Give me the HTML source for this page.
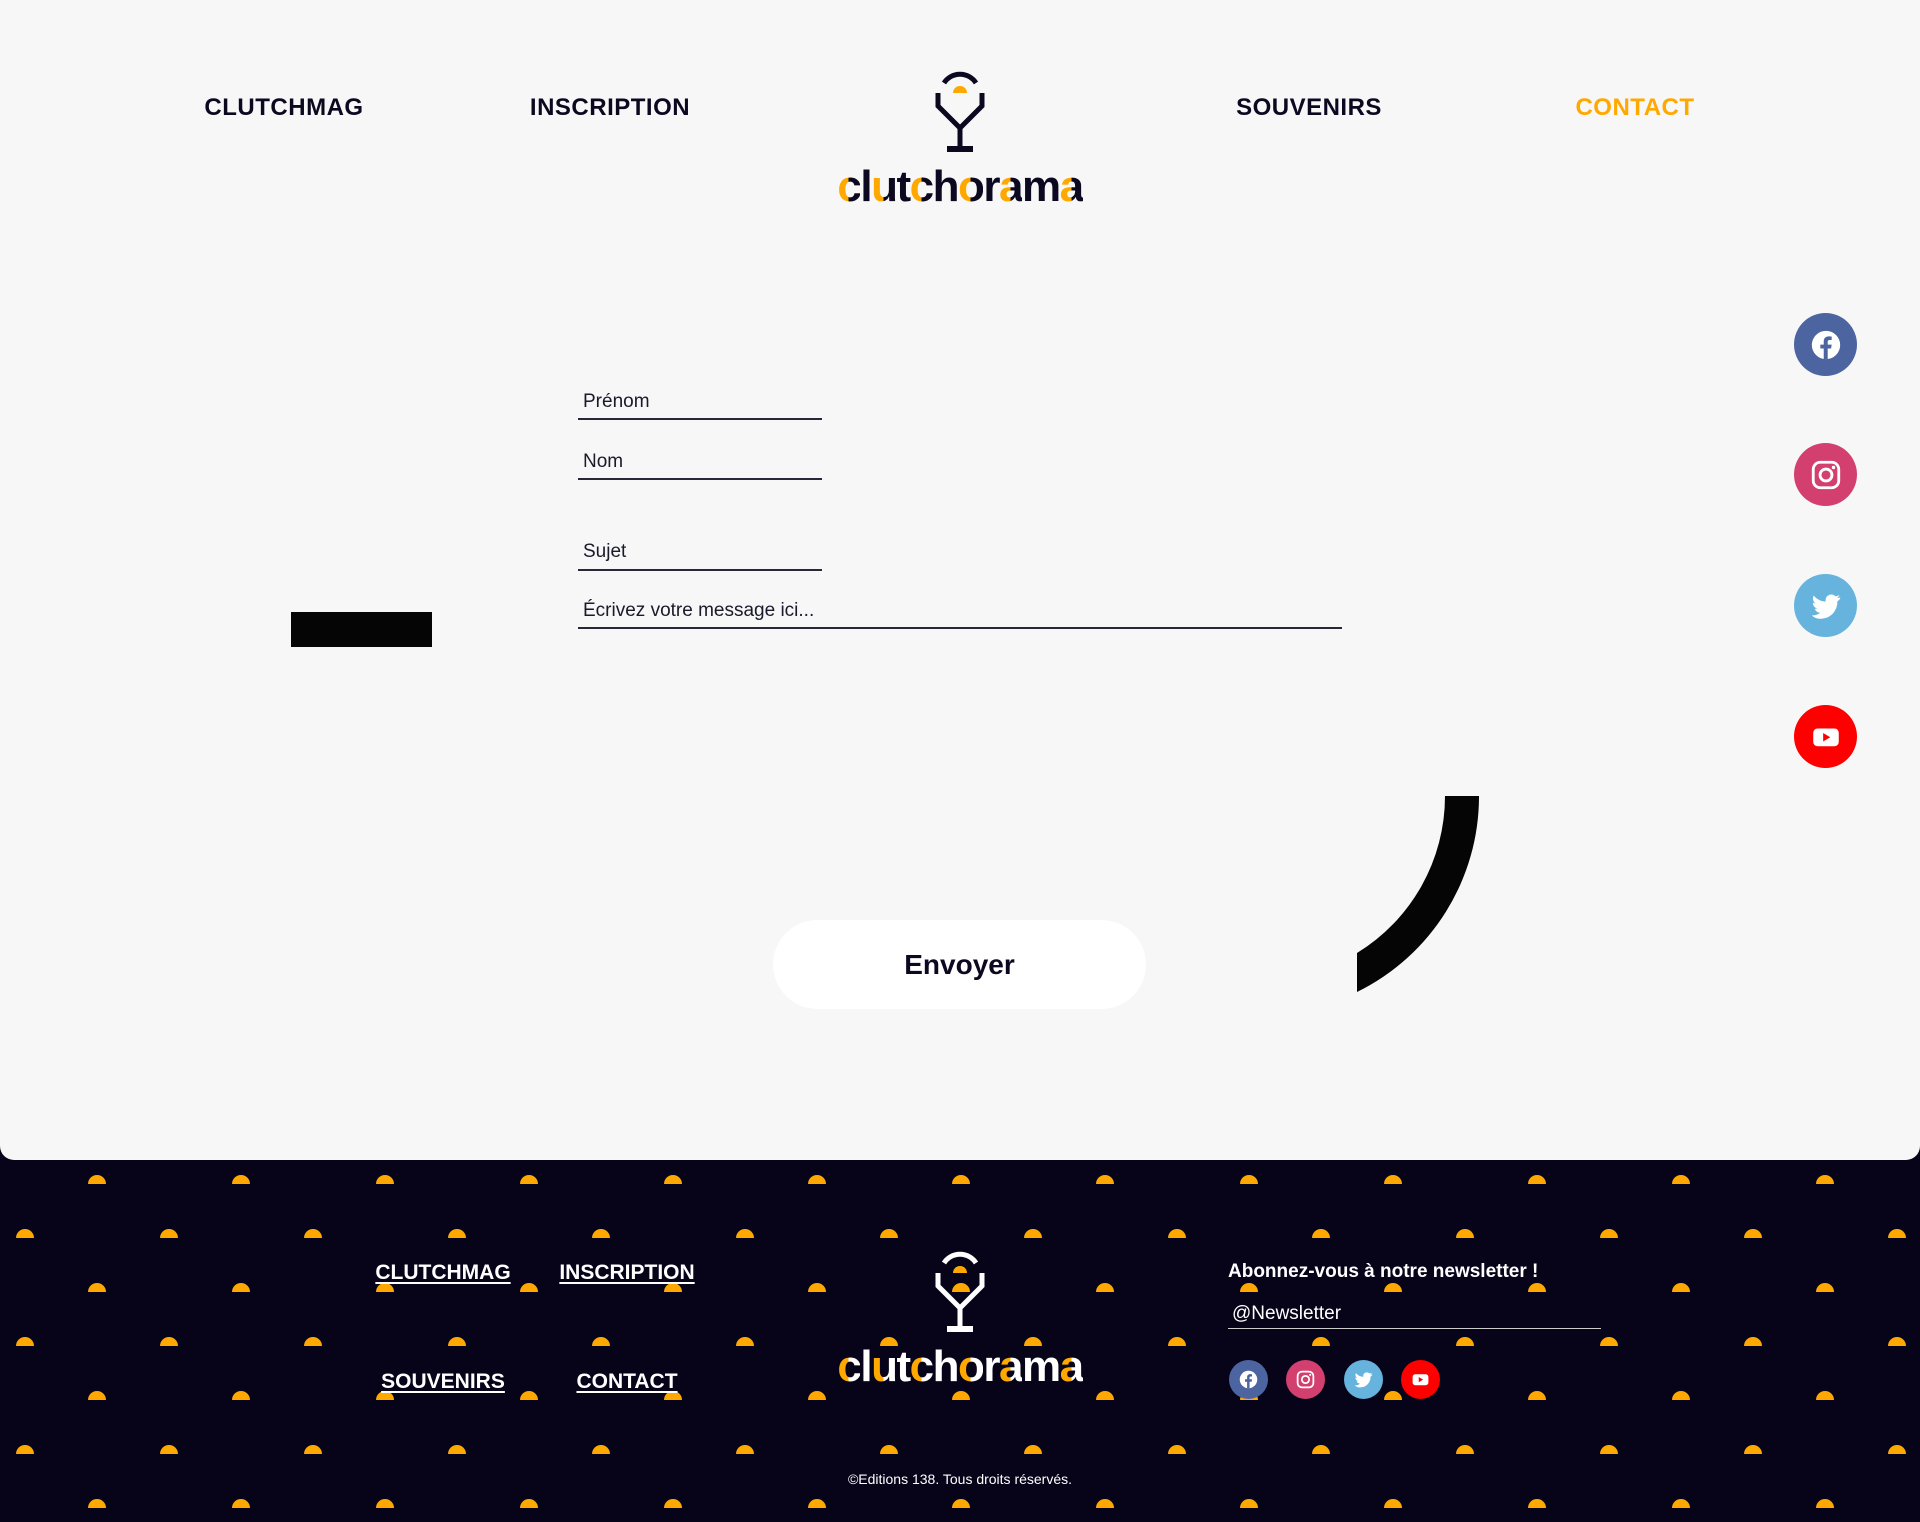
<!DOCTYPE html>
<html><head><meta charset="utf-8"><style>
*{margin:0;padding:0;box-sizing:border-box}
body{width:1920px;height:1522px;background:#07041a;font-family:"Liberation Sans",sans-serif;position:relative;overflow:hidden}
.main{position:absolute;left:0;top:0;width:1920px;height:1160px;background:#f7f7f7;border-radius:0 0 14px 14px}
.nav{position:absolute;top:94px;font-weight:bold;font-size:24px;color:#0b0820;transform:translateX(-50%);letter-spacing:0.5px}
.lbl{position:absolute;left:583px;font-size:19px;color:#1a1a2a}
.ln{position:absolute;left:578px;height:2px;background:#2a2838}
.soc{position:absolute;width:63px;height:63px;border-radius:50%;display:flex;align-items:center;justify-content:center}
.soc svg{width:34px;height:34px}
.ss{position:absolute;width:39px;height:39px;border-radius:50%;display:flex;align-items:center;justify-content:center;top:1360px}
.ss svg{width:21px;height:21px}
.fl{position:absolute;color:#fff;font-weight:bold;font-size:21px;text-decoration:underline;transform:translateX(-50%);text-underline-offset:3px}
.wm{position:absolute;left:830px;font-weight:bold;font-size:44px;letter-spacing:-1.5px;width:260px;text-align:center}
.wm span{display:inline-block;background-image:linear-gradient(90deg,#ffa800 0,#ffa800 50%,var(--c) 50%,var(--c) 100%);-webkit-background-clip:text;background-clip:text;-webkit-text-fill-color:transparent;color:transparent}
.wm span.d{background-image:none;-webkit-text-fill-color:var(--c);color:var(--c)}
</style></head><body>
<svg width="0" height="0" style="position:absolute">
<defs>
<symbol id="fb" viewBox="0 0 24 24"><circle cx="12" cy="12" r="10" fill="#fff"/><path d="M13.2 22V14.5h2.4l.4-2.8h-2.8V9.9c0-.8.3-1.4 1.4-1.4H16V6c-.3 0-1.1-.1-2.1-.1-2.1 0-3.5 1.3-3.5 3.6v2.2H8v2.8h2.4V22z" fill="#4c64a0"/></symbol>
<symbol id="ig" viewBox="0 0 24 24"><rect x="3" y="3" width="18" height="18" rx="5" fill="none" stroke="#fff" stroke-width="2"/><circle cx="12" cy="12" r="4.2" fill="none" stroke="#fff" stroke-width="2"/><circle cx="17.3" cy="6.7" r="1.2" fill="#fff"/></symbol>
<symbol id="tw" viewBox="0 0 24 24"><path d="M22 5.9c-.7.3-1.5.5-2.4.6.9-.5 1.5-1.3 1.8-2.3-.8.5-1.7.8-2.6 1-.8-.8-1.9-1.3-3-1.3-2.3 0-4.1 1.8-4.1 4.1 0 .3 0 .6.1.9C8.4 8.8 5.4 7.2 3.4 4.7c-.4.6-.6 1.3-.6 2.1 0 1.4.7 2.7 1.8 3.4-.7 0-1.3-.2-1.9-.5 0 2 1.4 3.7 3.3 4.1-.6.2-1.2.2-1.9.1.5 1.6 2 2.8 3.9 2.9-1.4 1.1-3.2 1.8-5.1 1.8-.3 0-.7 0-1-.1C3.7 20.4 5.9 21 8.3 21c7.5 0 11.7-6.2 11.700-11.700v-.5c.8-.6 1.5-1.3 2-2.1z" fill="#fff"/></symbol>
<symbol id="yt" viewBox="0 0 24 24"><rect x="3" y="6" width="18" height="12.5" rx="3" fill="#fff"/><path d="M10 9.2v6l5-3z" fill="#f00"/></symbol>
</defs></svg>

<div class="main">
<div class="nav" style="left:284px">CLUTCHMAG</div>
<div class="nav" style="left:610px">INSCRIPTION</div>
<div class="nav" style="left:1309px">SOUVENIRS</div>
<div class="nav" style="left:1635px;color:#ffa800">CONTACT</div>

<svg style="position:absolute;left:920px;top:60px" width="80" height="100" viewBox="920 60 80 100">
<path d="M944 83 A19 19 0 0 1 976 83" fill="none" stroke="#0b0820" stroke-width="5"/>
<path d="M953 93 A7 7 0 0 1 967 93 Z" fill="#ffa800"/>
<path d="M938 93 V106 L960 128 L982 106 V93" fill="none" stroke="#0b0820" stroke-width="5"/>
<path d="M960 127 V148" stroke="#0b0820" stroke-width="5"/>
<rect x="947" y="146" width="26" height="6" fill="#0b0820"/>
</svg>
<div class="wm" style="top:162px;--c:#0b0820"><span>c</span><span class="d">l</span><span>u</span><span class="d">t</span><span>c</span><span class="d">h</span><span>o</span><span class="d">r</span><span>a</span><span class="d">m</span><span>a</span></div>

<div class="lbl" style="top:391px">Prénom</div><div class="ln" style="top:418px;width:244px"></div>
<div class="lbl" style="top:451px">Nom</div><div class="ln" style="top:478px;width:244px"></div>
<div class="lbl" style="top:541px">Sujet</div><div class="ln" style="top:569px;width:244px"></div>
<div class="lbl" style="top:600px">Écrivez votre message ici...</div><div class="ln" style="top:627px;width:764px"></div>

<div style="position:absolute;left:291px;top:612px;width:141px;height:35px;background:#050505"></div>

<svg style="position:absolute;left:0;top:0" width="1920" height="1160"><path d="M1445 796 L1479 796 A218 218 0 0 1 1357 992 L1357 953 A184 184 0 0 0 1445 796 Z" fill="#050505"/></svg>

<div style="position:absolute;left:773px;top:920px;width:373px;height:89px;border-radius:45px;background:#fff;display:flex;align-items:center;justify-content:center;font-weight:bold;font-size:28px;color:#0b0820">Envoyer</div>

<div class="soc" style="left:1794px;top:313px;background:#4c64a0"><svg><use href="#fb"/></svg></div>
<div class="soc" style="left:1794px;top:443px;background:#d3406f"><svg><use href="#ig"/></svg></div>
<div class="soc" style="left:1794px;top:574px;background:#66b3dd"><svg><use href="#tw"/></svg></div>
<div class="soc" style="left:1794px;top:705px;background:#ff0000"><svg><use href="#yt"/></svg></div>
</div>

<svg style="position:absolute;left:0;top:1160px" width="1920" height="362">
<defs><pattern id="dots" width="144" height="108" patternUnits="userSpaceOnUse">
<path d="M88 24 A9 9 0 0 1 106 24 Z" fill="#ffa800"/>
<path d="M16 78 A9 9 0 0 1 34 78 Z" fill="#ffa800"/>
</pattern></defs>
<rect width="1920" height="362" fill="url(#dots)"/>
</svg>

<div class="fl" style="left:443px;top:1261px">CLUTCHMAG</div>
<div class="fl" style="left:627px;top:1261px">INSCRIPTION</div>
<div class="fl" style="left:443px;top:1370px">SOUVENIRS</div>
<div class="fl" style="left:627px;top:1370px">CONTACT</div>

<svg style="position:absolute;left:920px;top:1240px" width="80" height="100" viewBox="920 60 80 100">
<path d="M944 83 A19 19 0 0 1 976 83" fill="none" stroke="#fff" stroke-width="5"/>
<path d="M953 93 A7 7 0 0 1 967 93 Z" fill="#ffa800"/>
<path d="M938 93 V106 L960 128 L982 106 V93" fill="none" stroke="#fff" stroke-width="5"/>
<path d="M960 127 V148" stroke="#fff" stroke-width="5"/>
<rect x="947" y="146" width="26" height="6" fill="#fff"/>
</svg>
<div class="wm" style="top:1342px;--c:#fff"><span>c</span><span class="d">l</span><span>u</span><span class="d">t</span><span>c</span><span class="d">h</span><span>o</span><span class="d">r</span><span>a</span><span class="d">m</span><span>a</span></div>

<div style="position:absolute;left:1228px;top:1261px;color:#fff;font-weight:bold;font-size:19px">Abonnez-vous à notre newsletter !</div>
<div style="position:absolute;left:1232px;top:1303px;color:#fff;font-size:19px">@Newsletter</div>
<div style="position:absolute;left:1228px;top:1328px;width:373px;height:1px;background:#ccc"></div>
<div class="ss" style="left:1229px;background:#4c64a0"><svg><use href="#fb"/></svg></div>
<div class="ss" style="left:1286px;background:#d3406f"><svg><use href="#ig"/></svg></div>
<div class="ss" style="left:1344px;background:#66b3dd"><svg><use href="#tw"/></svg></div>
<div class="ss" style="left:1401px;background:#ff0000"><svg><use href="#yt"/></svg></div>

<div style="position:absolute;left:0;width:1920px;text-align:center;top:1471px;color:#fff;font-size:14px">©Editions 138. Tous droits réservés.</div>
</body></html>
